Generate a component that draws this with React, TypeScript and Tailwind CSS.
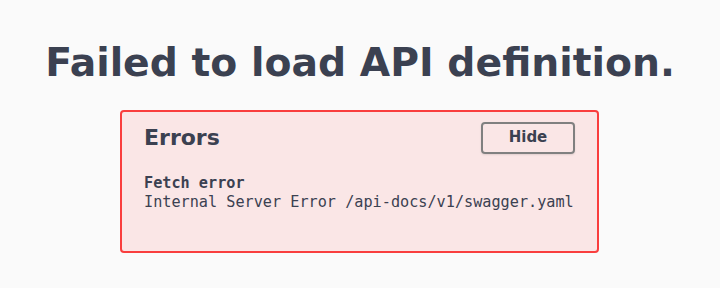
export default function App() {
  return (
    <div className="min-h-screen bg-[#fafafa] flex flex-col items-center pt-[35px] font-['DejaVu_Sans',sans-serif] text-[#3b4151]">
      <h1 className="text-[39.3px] font-bold leading-[56px]">Failed to load API definition.</h1>
      <div className="mt-[19px] mr-[1px] w-[479px] h-[143px] rounded-[4px] border-2 border-[#f93e3e] bg-[#fae6e6] pl-[22px] pr-[22px] pt-[9px]">
        <div className="flex items-center justify-between">
          <h4 className="text-[22px] font-bold">Errors</h4>
          <button className="w-[94px] h-[32px] rounded-[4px] border-2 border-[#808080] text-[15px] font-bold shadow-[0_1px_2px_rgba(0,0,0,0.1)]">
            Hide
          </button>
        </div>
        <div className="mt-[20px] font-['DejaVu_Sans_Mono',monospace] text-[15.2px] leading-[19px]">
          <div className="font-bold">Fetch error</div>
          <div>Internal Server Error /api-docs/v1/swagger.yaml</div>
        </div>
      </div>
    </div>
  );
}
